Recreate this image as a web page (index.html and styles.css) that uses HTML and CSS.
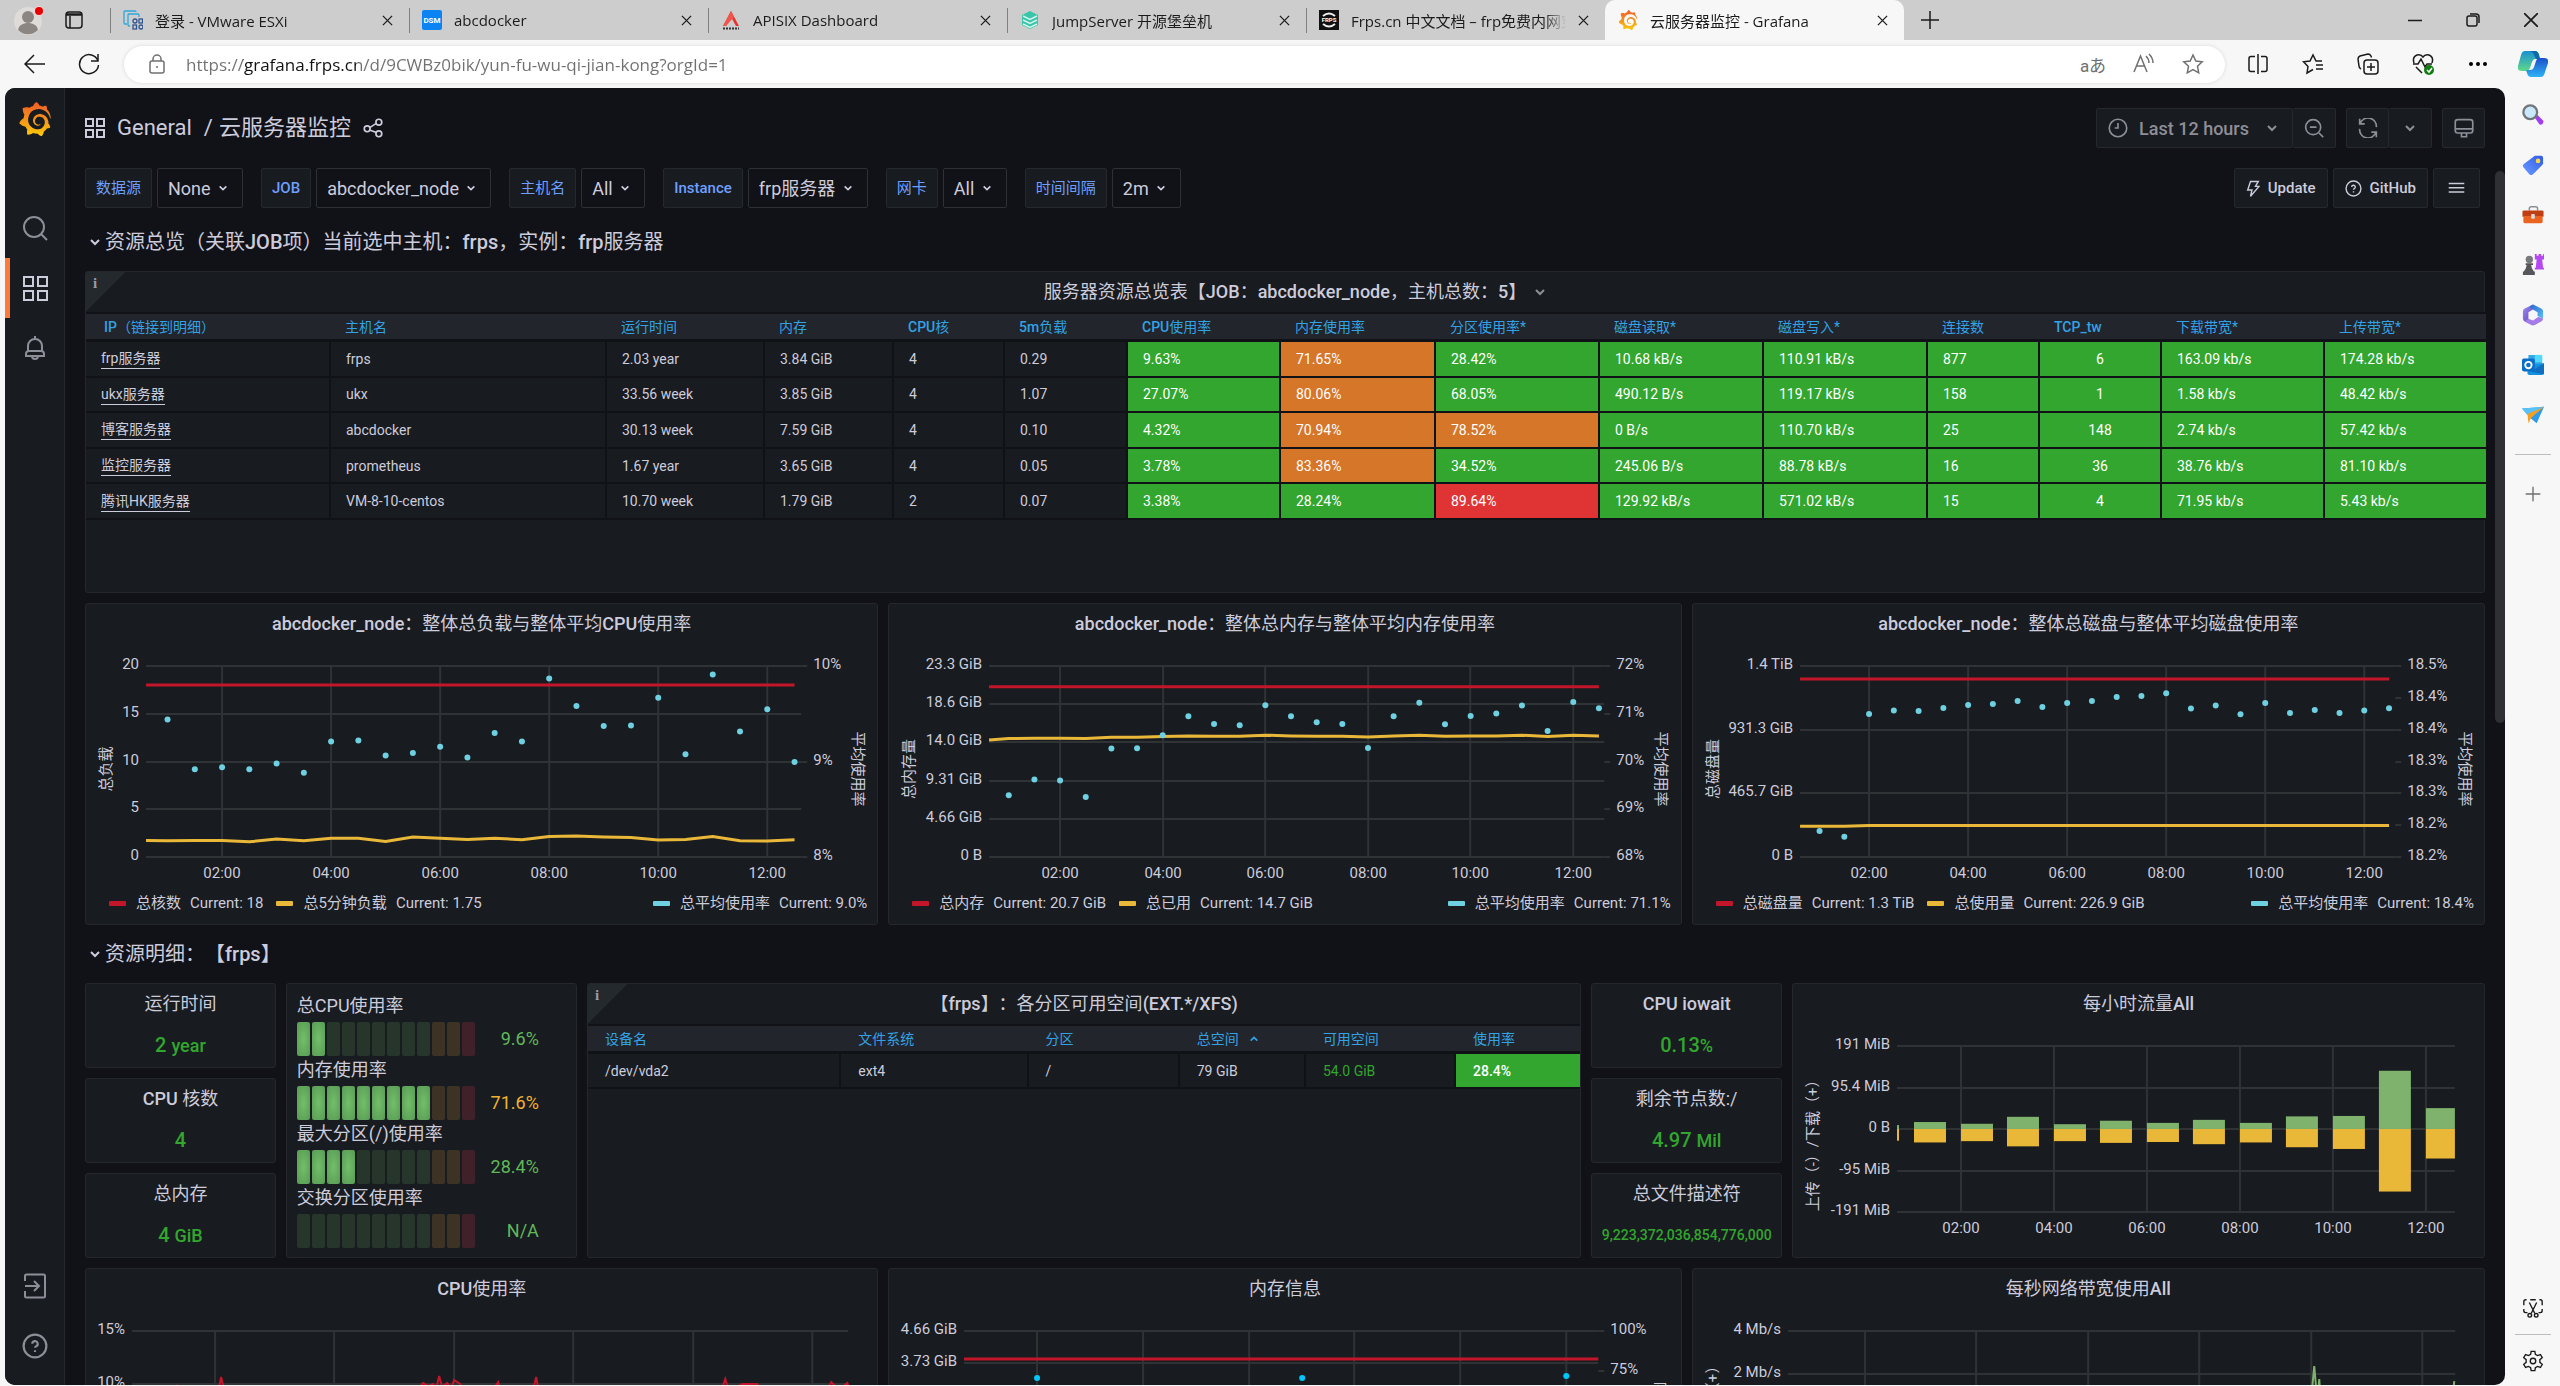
FILE: index.html
```html
<!DOCTYPE html>
<html lang="zh-CN">
<head>
<meta charset="UTF-8">
<title>云服务器监控 - Grafana</title>
<link rel="stylesheet" href="styles.css">
</head>
<body>

<!-- shared icons -->
<svg class="sprite" aria-hidden="true">
  <defs>
    <linearGradient id="flame" x1="0" y1="0" x2="0" y2="1"><stop offset="0" stop-color="#f05a28"/><stop offset="1" stop-color="#fbca0a"/></linearGradient>
    <linearGradient id="cop1" x1="0" y1="0" x2="0" y2="1"><stop offset="0" stop-color="#1b8fd2"/><stop offset="1" stop-color="#5fd98a"/></linearGradient>
    <linearGradient id="cop2" x1="0" y1="0" x2="0" y2="1"><stop offset="0" stop-color="#1a4fc9"/><stop offset="1" stop-color="#2fb4f5"/></linearGradient>
    <linearGradient id="tagg" x1="1" y1="0" x2="0" y2="1"><stop offset="0" stop-color="#2f5be8"/><stop offset="1" stop-color="#6b9bff"/></linearGradient>
    <linearGradient id="m1" x1="0" y1="0" x2="1" y2="1"><stop offset="0" stop-color="#a58bf0"/><stop offset="1" stop-color="#4a3fb0"/></linearGradient>
    <linearGradient id="m2" x1="0" y1="0" x2="1" y2="1"><stop offset="0" stop-color="#2a63d0"/><stop offset="1" stop-color="#5ac0f5"/></linearGradient>
  </defs>
  <symbol id="i-grafana" viewBox="0 0 24 24"><path fill="url(#flame)" d="M23.02 10.59a8.578 8.578 0 0 0-.862-3.034 8.911 8.911 0 0 0-1.789-2.445c.337-1.342-.413-2.505-.413-2.505-1.292-.08-2.113.4-2.416.62-.052-.02-.102-.044-.154-.064-.22-.089-.446-.172-.677-.247-.231-.073-.47-.14-.711-.197a9.867 9.867 0 0 0-.875-.161C14.557.753 12.94 0 12.94 0c-1.804 1.145-2.147 2.744-2.147 2.744l-.018.093c-.098.029-.2.057-.298.088-.138.042-.275.094-.413.143-.138.055-.275.107-.41.166a8.869 8.869 0 0 0-1.557.87l-.063-.029c-2.497-.955-4.716.195-4.716.195-.203 2.658.996 4.33 1.235 4.636a11.608 11.608 0 0 0-.607 2.635C1.636 12.677.953 15.014.953 15.014c1.926 2.214 4.171 2.351 4.171 2.351.003-.002.006-.002.006-.005.285.509.615.994.986 1.446.156.19.32.371.488.548-.704 2.009.099 3.68.099 3.68 2.144.08 3.553-.937 3.849-1.173a9.784 9.784 0 0 0 3.164.501h.08l.055-.003.107-.002.103-.005.003.002c1.01 1.44 2.788 1.646 2.788 1.646 1.264-1.332 1.337-2.653 1.337-2.94v-.058c0-.02-.003-.039-.003-.06.265-.187.52-.387.758-.6a7.875 7.875 0 0 0 1.415-1.7c1.43.083 2.437-.885 2.437-.885-.236-1.49-1.085-2.216-1.264-2.354l-.018-.013-.016-.013a.217.217 0 0 1-.031-.02c.008-.092.016-.18.02-.27.011-.162.016-.323.016-.48v-.253l-.005-.098-.008-.135a1.891 1.891 0 0 0-.01-.13c-.003-.042-.008-.083-.013-.125l-.016-.124-.018-.122a6.215 6.215 0 0 0-2.032-3.73 6.015 6.015 0 0 0-3.222-1.46 6.292 6.292 0 0 0-.85-.048l-.107.002h-.063l-.044.003-.104.008a4.777 4.777 0 0 0-3.335 1.695c-.332.4-.592.84-.768 1.297a4.594 4.594 0 0 0-.312 1.817l.003.091c.005.055.007.11.013.164a3.615 3.615 0 0 0 .698 1.82 3.53 3.53 0 0 0 1.827 1.282c.33.098.66.14.971.137.039 0 .078 0 .114-.002l.063-.003c.02 0 .041-.003.062-.003.034-.002.065-.007.099-.01.007 0 .018-.003.028-.003l.031-.005.06-.008a1.18 1.18 0 0 0 .112-.02c.036-.008.072-.013.109-.024a2.634 2.634 0 0 0 .914-.415c.028-.02.056-.041.085-.065a.248.248 0 0 0 .039-.35.244.244 0 0 0-.309-.06l-.078.042c-.09.044-.184.083-.283.116a2.476 2.476 0 0 1-.475.096c-.028.003-.054.006-.083.006l-.083.002c-.026 0-.054 0-.08-.002l-.102-.006h-.012l-.024.006c-.016-.003-.031-.003-.044-.006-.031-.002-.06-.007-.091-.01a2.59 2.59 0 0 1-.724-.213 2.557 2.557 0 0 1-.667-.438 2.52 2.52 0 0 1-.805-1.475 2.306 2.306 0 0 1-.029-.444l.006-.122v-.023l.002-.031c.003-.021.003-.04.005-.06a3.163 3.163 0 0 1 1.352-2.29 3.12 3.12 0 0 1 .937-.43 2.946 2.946 0 0 1 .776-.101h.06l.07.002.045.003h.026l.07.005a4.041 4.041 0 0 1 1.635.49 3.94 3.94 0 0 1 1.602 1.662 3.77 3.77 0 0 1 .397 1.414l.005.076.003.075c.002.026.002.05.002.075 0 .024.003.052 0 .07v.065l-.002.073-.008.174a6.195 6.195 0 0 1-.08.639 5.1 5.1 0 0 1-.267.927 5.31 5.31 0 0 1-.624 1.13 5.052 5.052 0 0 1-3.237 2.014 4.82 4.82 0 0 1-.649.066l-.039.003h-.287a6.607 6.607 0 0 1-1.716-.265 6.776 6.776 0 0 1-3.4-2.274 6.75 6.75 0 0 1-.746-1.15 6.616 6.616 0 0 1-.714-2.596l-.005-.083-.002-.02v-.056l-.003-.073v-.096l-.003-.104v-.07l.003-.163c.008-.22.026-.45.054-.678a8.707 8.707 0 0 1 .28-1.355c.128-.444.286-.872.473-1.277a7.04 7.04 0 0 1 1.456-2.1 5.925 5.925 0 0 1 .953-.763c.169-.111.343-.213.524-.306.089-.05.182-.091.273-.135.047-.02.093-.042.138-.062a7.177 7.177 0 0 1 .714-.267l.145-.045c.049-.015.098-.026.148-.041.098-.029.197-.052.296-.076.049-.013.1-.02.15-.033l.15-.032.151-.028.076-.013.075-.01.153-.024c.057-.01.114-.013.171-.023l.169-.021c.036-.003.073-.008.106-.01l.073-.008.036-.003.042-.002c.057-.003.114-.008.171-.01l.086-.006h.023l.037-.003.145-.007a7.999 7.999 0 0 1 1.708.125 7.917 7.917 0 0 1 2.048.68 8.253 8.253 0 0 1 1.672 1.09l.09.077.089.078c.06.052.114.107.171.159.057.052.112.106.166.16.052.055.107.107.159.164a8.671 8.671 0 0 1 1.41 1.978c.012.026.028.052.04.078l.04.078.075.156c.023.051.05.1.07.153l.065.15a8.848 8.848 0 0 1 .45 1.34.19.19 0 0 0 .201.142.186.186 0 0 0 .172-.184c.01-.246.002-.532-.024-.856z"/></symbol>
  <symbol id="i-apps" viewBox="2 2 20 20"><path d="M3 3h7v7H3zM14 3h7v7h-7zM3 14h7v7H3zM14 14h7v7h-7z"/></symbol>
  <symbol id="i-down" viewBox="0 0 12 12"><path d="M2 4l4 4 4-4"/></symbol>
  <symbol id="i-close" viewBox="0 0 12 12"><path d="M1 1l10 10M11 1L1 11"/></symbol>
  <symbol id="i-help" viewBox="0 0 24 24"><circle cx="12" cy="12" r="10.500"/><path d="M9.500 10a2.500 2.500 0 1 1 3.600 2.200c-.7.4-1.100.7-1.100 1.500M12 16v1.500"/></symbol>
</svg>

<header class="tabs">
  <button class="avatar" aria-label="Profile">
    <svg width="30" height="30" viewBox="0 0 30 30"><circle cx="14" cy="16" r="14" fill="#dedbd8"/><circle cx="14" cy="12" r="6" fill="#8c8682"/><path d="M4 25c1-5 5-7 10-7s9 2 10 7a14 14 0 0 1-20 0z" fill="#8c8682"/><circle cx="25" cy="6" r="5" fill="#f3d5d5"/><circle cx="25" cy="6" r="4" fill="#e80000"/></svg>
  </button>
  <button class="spaces" aria-label="Workspaces">
    <svg class="line dark" width="20" height="20" viewBox="0 0 20 20"><rect x="2" y="2" width="16" height="16" rx="3"/><path d="M2 4h16M2 5h16M6 6v12"/></svg>
  </button>
  <div class="tab">
    <svg class="fav" viewBox="0 0 20 20" fill="none" stroke="#31a6dc" stroke-width="1.3"><path d="M4 14H2q-1 0-1-1V2q0-1 1-1h10q1 0 1 1M7 16H6q-1 0-1-1V5q0-1 1-1h9q1 0 1 1v2"/><g stroke="#31568f"><circle cx="12" cy="11" r="2"/><rect x="16" y="9" width="3.5" height="4"/><rect x="10" y="15" width="3.5" height="4"/><circle cx="18" cy="17" r="2"/></g></svg>
    <span class="name">登录 - VMware ESXi</span><button class="x" aria-label="Close"><svg><use href="#i-close"/></svg></button>
  </div>
  <div class="tab">
    <svg class="fav" viewBox="0 0 20 20"><rect width="20" height="20" rx="2" fill="#0b83f3"/><text x="10" y="13" text-anchor="middle" font-size="8" font-weight="700" fill="#fff" font-family="Roboto, sans-serif">DSM</text></svg>
    <span class="name">abcdocker</span><button class="x" aria-label="Close"><svg><use href="#i-close"/></svg></button>
  </div>
  <div class="tab">
    <svg class="fav" viewBox="0 0 20 20"><path d="M10 1l8 15h-3L10 7l-5 9H2z" fill="#e8332c"/><path d="M10 1l3 6-8 9H2z" fill="#f0554c"/><path d="M2 18.500h16" stroke="#333" stroke-width="2" stroke-dasharray="2 1"/></svg>
    <span class="name">APISIX Dashboard</span><button class="x" aria-label="Close"><svg><use href="#i-close"/></svg></button>
  </div>
  <div class="tab">
    <svg class="fav" viewBox="0 0 20 20" fill="none" stroke="#1fb598" stroke-width="2"><path d="M10 1l8 4v10l-8 4-8-4V5z" fill="#39c5a9" stroke="none"/><g stroke="#d5f3ec" stroke-width="1.500"><path d="M17 6l-7 3.500L3 6M3 10l7 3.500L17 10M3 14l7 3.500L17 14"/></g></svg>
    <span class="name">JumpServer 开源堡垒机</span><button class="x" aria-label="Close"><svg><use href="#i-close"/></svg></button>
  </div>
  <div class="tab">
    <svg class="fav" viewBox="0 0 20 20"><rect width="20" height="20" fill="#111"/><path d="M4 6q6-5 12 0M4 14q6 5 12 0" stroke="#eee" stroke-width="2" fill="none"/><text x="10" y="12" text-anchor="middle" font-size="6" font-weight="700" fill="#fff" font-family="Roboto, sans-serif">FRPS</text></svg>
    <span class="name">Frps.cn 中文文档 – frp免费内网穿</span><button class="x" aria-label="Close"><svg><use href="#i-close"/></svg></button>
  </div>
  <div class="tab active">
    <svg class="fav"><use href="#i-grafana"/></svg>
    <span class="name">云服务器监控 - Grafana</span><button class="x" aria-label="Close"><svg><use href="#i-close"/></svg></button>
  </div>
  <button class="new" aria-label="New tab"><svg class="line dark" width="18" height="18" viewBox="0 0 18 18"><path d="M9 0v18M0 9h18"/></svg></button>
  <div class="win">
    <button aria-label="Minimize"><svg class="line dark" width="14" height="14" viewBox="0 0 14 14"><path d="M0 7.500h14"/></svg></button>
    <button aria-label="Restore"><svg class="line dark" width="14" height="14" viewBox="0 0 14 14"><rect x="1" y="3" width="10" height="10" rx="2"/><path d="M4 1h6q3 0 3 3v6"/></svg></button>
    <button aria-label="Close window"><svg class="line dark" width="14" height="14" viewBox="0 0 12 12"><path d="M0 0l12 12M12 0L0 12"/></svg></button>
  </div>
</header>

<div class="toolbar">
  <button aria-label="Back"><svg class="line dark" width="22" height="22" viewBox="0 0 22 22"><path d="M21 11H1M10 2l-9 9 9 9"/></svg></button>
  <button aria-label="Reload"><svg class="line dark" width="22" height="22" viewBox="0 0 22 22"><path d="M20 8a9.500 9.500 0 1 0 .5 4M20 1v7h-7"/></svg></button>
  <div class="address">
    <svg class="line mid" width="20" height="22" viewBox="0 0 20 22"><rect x="3" y="8" width="14" height="12" rx="2"/><path d="M6 8V6a4 4 0 0 1 8 0v2M10 13v2"/></svg>
    <input class="url" type="text" aria-label="Address" value="https://grafana.frps.cn/d/9CWBz0bik/yun-fu-wu-qi-jian-kong?orgId=1">
    <button class="lang" aria-label="Translate">aあ</button>
    <button aria-label="Read aloud"><svg class="line mid" width="22" height="22" viewBox="0 0 22 22"><path d="M2 19L8.500 3 15 19M4.500 13h8M14 3q3 3 3 7M17 1q4 4 4 9"/></svg></button>
    <button aria-label="Favorite"><svg class="line mid" width="22" height="22" viewBox="0 0 22 22"><path d="M11 2l2.800 6 6.400.8-4.700 4.500 1.200 6.500L11 16.600l-5.700 3.200 1.200-6.500L1.800 8.800 8.200 8z"/></svg></button>
  </div>
  <div class="tools">
    <button aria-label="Split screen"><svg class="line dark" width="22" height="22" viewBox="0 0 22 22"><path d="M8 3.500H4q-2 0-2 2v11q0 2 2 2h4M14 3.500h4q2 0 2 2v11q0 2-2 2h-4M11 1v20"/></svg></button>
    <button aria-label="Favorites"><svg class="line dark" width="22" height="22" viewBox="0 0 22 22"><path d="M20 8h-6l-3-6-3 6-6.500.8L6 13.500 5 20l6-3.500M14 12h7M14 16h7"/></svg></button>
    <button aria-label="Collections"><svg class="line dark" width="22" height="22" viewBox="0 0 22 22"><rect x="7" y="7" width="14" height="14" rx="3"/><path d="M14 10v8M10 14h8M4 16q-2-1-2-3L1 6q0-2 2-3l8-2q2 0 3 2l.5 1.500"/></svg></button>
    <button aria-label="Browser essentials"><svg class="line dark" width="22" height="22" viewBox="0 0 22 22"><path d="M2 10Q0 4 5 2q4-1 6 2 2-3 6-2 5 2 3 8M1 11h5l3-5 4 8 2-3h5M4 14l6 6"/><circle cx="17" cy="17" r="5" fill="#107c10" stroke="none"/><path d="M15 17l2 2 3-4" stroke="#fff"/></svg></button>
    <button aria-label="More"><svg width="22" height="22" viewBox="0 0 22 22"><circle cx="4" cy="11" r="2"/><circle cx="11" cy="11" r="2"/><circle cx="18" cy="11" r="2"/></svg></button>
    <button aria-label="Copilot"><svg width="30" height="28" viewBox="0 0 30 28"><path d="M7 1h10q3 0 4 4l1 4h-5q-2 0-3 3l-2 6q-1 3-4 3H4q-5 0-4-5L3 5q1-4 4-4z" fill="url(#cop1)"/><path d="M17 1q3 0 4 4l1 4h-4l-2-4q-1-4-5-4z" fill="#0f6aa8"/><path d="M23 27H13q-3 0-4-4l-1-3h4q3 0 4-3l2-6q1-3 4-3h4q5 0 4 5l-3 9q-1 5-4 5z" fill="url(#cop2)"/></svg></button>
  </div>
</div>

<div class="window">
  <div class="grafana">
    <nav class="sidemenu">
      <a class="logo" href="#" aria-label="Home"><svg><use href="#i-grafana"/></svg></a>
      <a href="#" aria-label="Search"><svg viewBox="0 0 26 26"><circle cx="12" cy="12" r="10"/><path d="M19.500 19.500L25 25"/></svg></a>
      <a class="on" href="#" aria-label="Dashboards"><svg viewBox="0 0 26 26"><path d="M2 2h9v9H2zM16 2h9v9h-9zM2 16h9v9H2zM16 16h9v9h-9z"/></svg></a>
      <a href="#" aria-label="Alerting"><svg viewBox="0 0 26 26"><path d="M13 1v3M6 16v-5a7 7 0 0 1 14 0v5M4 21v-2q0-3 3-3h12q3 0 3 3v2zM10 21q0 3 3 3t3-3"/></svg></a>
      <a class="bottom" href="#" aria-label="Sign in"><svg viewBox="0 0 26 26"><path d="M3 8V3q0-1.500 1.500-1.500h17Q23 1.500 23 3v20q0 1.500-1.500 1.500h-17Q3 24.500 3 23v-5M3 13h14M12 8l5 5-5 5"/></svg></a>
      <a href="#" aria-label="Help"><svg><use href="#i-help"/></svg></a>
    </nav>

    <main class="main">
      <div class="bar">
        <h1 class="crumbs">
          <svg class="ic"><use href="#i-apps"/></svg>
          <a href="#">General</a><span>/</span><a href="#">云服务器监控</a>
          <svg class="ic" viewBox="0 0 24 24"><circle cx="5" cy="13" r="3.500"/><circle cx="19" cy="5" r="3.500"/><circle cx="19" cy="19" r="3.500"/><path d="M8 11.500l8-5M8 14.500l8 3"/></svg>
        </h1>
        <div class="group">
          <button class="btn time"><svg class="ic" viewBox="0 0 24 24"><circle cx="12" cy="12" r="10.500"/><path d="M12 6v6H8"/></svg>Last 12 hours<svg class="ch"><use href="#i-down"/></svg></button>
          <button class="btn icon" aria-label="Zoom out"><svg class="ic" viewBox="0 0 24 24"><circle cx="11" cy="11" r="9"/><path d="M7 11h8M18 18l5 5"/></svg></button>
        </div>
        <div class="group">
          <button class="btn icon" aria-label="Refresh"><svg class="ic" viewBox="0 0 24 24"><path d="M2 1v6h6M2.500 7A10 10 0 0 1 22 11M22 23v-6h-6M21.500 17A10 10 0 0 1 2 13"/></svg></button>
          <button class="btn icon" aria-label="Interval"><svg class="ch"><use href="#i-down"/></svg></button>
        </div>
        <div class="group">
          <button class="btn icon" aria-label="Cycle view"><svg class="ic" viewBox="0 0 24 24"><rect x="1.500" y="2" width="21" height="16" rx="3"/><path d="M2 13h20M8 22.500h8M9 18v4M15 18v4"/></svg></button>
        </div>
      </div>

      <div class="bar submenu">
        <div class="var"><label for="v1">数据源</label><select id="v1"><option>None</option></select></div>
        <div class="var"><label for="v2"><b>JOB</b></label><select id="v2"><option>abcdocker_node</option></select></div>
        <div class="var"><label for="v3">主机名</label><select id="v3"><option>All</option></select></div>
        <div class="var"><label for="v4"><b>Instance</b></label><select id="v4"><option>frp服务器</option></select></div>
        <div class="var"><label for="v5">网卡</label><select id="v5"><option>All</option></select></div>
        <div class="var"><label for="v6">时间间隔</label><select id="v6"><option>2m</option></select></div>
        <div class="links">
          <a class="btn" href="#"><svg class="ic bolt" viewBox="2 0 19 24"><path d="M8 2h11l-4 7h5L8 23l2-9H4z"/></svg>Update</a>
          <a class="btn" href="#"><svg class="ic"><use href="#i-help"/></svg>GitHub</a>
          <button class="btn menu" aria-label="Menu"><svg class="ic" viewBox="0 0 24 24"><path d="M1 5h22M1 11h22M1 17h22"/></svg></button>
        </div>
      </div>

      <h2 class="row"><svg class="ch"><use href="#i-down"/></svg><span>资源总览（关联<b>JOB</b>项）当前选中主机：<b>frps</b>，实例：<b>frp</b>服务器</span></h2>

      <div class="grid">
        <section class="panel w24 overview">
          <span class="info">i</span>
          <h3><span>服务器资源总览表【<b>JOB</b>：<b>abcdocker_node</b>，主机总数：<b>5</b>】</span><svg class="ch"><use href="#i-down"/></svg></h3>
          <table class="hosts">
            <colgroup><col class="c245"><col class="c276"><col class="c158"><col class="c129"><col class="c111"><col class="c123"><col class="c153"><col class="c155"><col class="c164"><col class="c164"><col class="c164"><col class="c112"><col class="c122"><col class="c163"><col class="c161"></colgroup>
            <thead>
              <tr><th><b>IP</b>（链接到明细）</th><th>主机名</th><th>运行时间</th><th>内存</th><th><b>CPU</b>核</th><th><b>5m</b>负载</th><th><b>CPU</b>使用率</th><th>内存使用率</th><th>分区使用率*</th><th>磁盘读取*</th><th>磁盘写入*</th><th>连接数</th><th><b>TCP_tw</b></th><th>下载带宽*</th><th>上传带宽*</th></tr>
            </thead>
            <tbody>
              <tr><td><a href="#">frp服务器</a></td><td>frps</td><td>2.03 year</td><td>3.84 GiB</td><td>4</td><td>0.29</td><td class="ok">9.63%</td><td class="warn">71.65%</td><td class="ok">28.42%</td><td class="ok">10.68 kB/s</td><td class="ok">110.91 kB/s</td><td class="ok">877</td><td class="ok mid">6</td><td class="ok">163.09 kb/s</td><td class="ok">174.28 kb/s</td></tr>
              <tr><td><a href="#">ukx服务器</a></td><td>ukx</td><td>33.56 week</td><td>3.85 GiB</td><td>4</td><td>1.07</td><td class="ok">27.07%</td><td class="warn">80.06%</td><td class="ok">68.05%</td><td class="ok">490.12 B/s</td><td class="ok">119.17 kB/s</td><td class="ok">158</td><td class="ok mid">1</td><td class="ok">1.58 kb/s</td><td class="ok">48.42 kb/s</td></tr>
              <tr><td><a href="#">博客服务器</a></td><td>abcdocker</td><td>30.13 week</td><td>7.59 GiB</td><td>4</td><td>0.10</td><td class="ok">4.32%</td><td class="warn">70.94%</td><td class="warn">78.52%</td><td class="ok">0 B/s</td><td class="ok">110.70 kB/s</td><td class="ok">25</td><td class="ok mid">148</td><td class="ok">2.74 kb/s</td><td class="ok">57.42 kb/s</td></tr>
              <tr><td><a href="#">监控服务器</a></td><td>prometheus</td><td>1.67 year</td><td>3.65 GiB</td><td>4</td><td>0.05</td><td class="ok">3.78%</td><td class="warn">83.36%</td><td class="ok">34.52%</td><td class="ok">245.06 B/s</td><td class="ok">88.78 kB/s</td><td class="ok">16</td><td class="ok mid">36</td><td class="ok">38.76 kb/s</td><td class="ok">81.10 kb/s</td></tr>
              <tr><td><a href="#">腾讯HK服务器</a></td><td>VM-8-10-centos</td><td>10.70 week</td><td>1.79 GiB</td><td>2</td><td>0.07</td><td class="ok">3.38%</td><td class="ok">28.24%</td><td class="bad">89.64%</td><td class="ok">129.92 kB/s</td><td class="ok">571.02 kB/s</td><td class="ok">15</td><td class="ok mid">4</td><td class="ok">71.95 kb/s</td><td class="ok">5.43 kb/s</td></tr>
            </tbody>
          </table>
        </section>

        <section class="panel w8">
          <h3><span><b>abcdocker_node</b>：整体总负载与整体平均<b>CPU</b>使用率</span></h3>
          <div class="chart" id="load"></div>
          <ul class="legend"><li class="red">总核数<span>Current: 18</span></li><li class="yellow">总5分钟负载<span>Current: 1.75</span></li><li class="cyan">总平均使用率<span>Current: 9.0%</span></li></ul>
        </section>
        <section class="panel w8">
          <h3><span><b>abcdocker_node</b>：整体总内存与整体平均内存使用率</span></h3>
          <div class="chart" id="mem"></div>
          <ul class="legend"><li class="red">总内存<span>Current: 20.7 GiB</span></li><li class="yellow">总已用<span>Current: 14.7 GiB</span></li><li class="cyan">总平均使用率<span>Current: 71.1%</span></li></ul>
        </section>
        <section class="panel w8">
          <h3><span><b>abcdocker_node</b>：整体总磁盘与整体平均磁盘使用率</span></h3>
          <div class="chart" id="disk"></div>
          <ul class="legend"><li class="red">总磁盘量<span>Current: 1.3 TiB</span></li><li class="yellow">总使用量<span>Current: 226.9 GiB</span></li><li class="cyan">总平均使用率<span>Current: 18.4%</span></li></ul>
        </section>
      </div>

      <h2 class="row second"><svg class="ch"><use href="#i-down"/></svg><span>资源明细：【<b>frps</b>】</span></h2>

      <div class="grid">
        <div class="stack w2">
          <section class="panel stat"><h3>运行时间</h3><p>2 <small>year</small></p></section>
          <section class="panel stat"><h3><span><b>CPU</b> 核数</span></h3><p>4</p></section>
          <section class="panel stat"><h3>总内存</h3><p>4 <small>GiB</small></p></section>
        </div>
        <section class="panel w3 gauges">
          <div class="gauge" data-lit="2"><h4>总CPU使用率</h4><div class="lcd"></div><span>9.6%</span></div>
          <div class="gauge" data-lit="9"><h4>内存使用率</h4><div class="lcd"></div><span class="high">71.6%</span></div>
          <div class="gauge" data-lit="4"><h4>最大分区(/)使用率</h4><div class="lcd"></div><span>28.4%</span></div>
          <div class="gauge" data-lit="0"><h4>交换分区使用率</h4><div class="lcd"></div><span>N/A</span></div>
        </section>
        <section class="panel w10">
          <span class="info">i</span>
          <h3><span>【<b>frps</b>】：各分区可用空间<b>(EXT.*/XFS)</b></span></h3>
          <table class="parts">
            <colgroup><col class="c253"><col class="c187"><col class="c151"><col class="c126"><col class="c150"><col class="c124"></colgroup>
            <thead>
              <tr><th>设备名</th><th>文件系统</th><th>分区</th><th>总空间<svg class="ch up"><use href="#i-down"/></svg></th><th>可用空间</th><th>使用率</th></tr>
            </thead>
            <tbody>
              <tr><td>/dev/vda2</td><td>ext4</td><td>/</td><td>79 GiB</td><td class="free">54.0 GiB</td><td class="ok"><b>28.4%</b></td></tr>
            </tbody>
          </table>
        </section>
        <div class="stack w2">
          <section class="panel stat"><h3><b>CPU iowait</b></h3><p>0.13<small>%</small></p></section>
          <section class="panel stat"><h3>剩余节点数:/</h3><p>4.97 <small>Mil</small></p></section>
          <section class="panel stat"><h3>总文件描述符</h3><p class="long">9,223,372,036,854,776,000</p></section>
        </div>
        <section class="panel w7">
          <h3><span>每小时流量<b>All</b></span></h3>
          <div class="chart" id="traffic"></div>
        </section>

        <section class="panel w8"><h3><span><b>CPU</b>使用率</span></h3><div class="chart" id="cpu"></div></section>
        <section class="panel w8"><h3>内存信息</h3><div class="chart" id="meminfo"></div></section>
        <section class="panel w8"><h3><span>每秒网络带宽使用<b>All</b></span></h3><div class="chart" id="net"></div></section>
      </div>
      <div class="thumb"></div>
    </main>
  </div>

  <aside class="edgebar">
    <button aria-label="Search"><svg viewBox="0 0 24 24"><path d="M14 15l3-3 6 6q1 2-1 4-2 1-3 0z" fill="#a23cf0"/><circle cx="9" cy="9" r="7.500" fill="#c9e9fb" stroke="#72767b" stroke-width="2.500"/></svg></button>
    <button aria-label="Shopping"><svg viewBox="0 0 24 24"><path d="M14 2h7q2 0 2 2v7L12 22q-2 2-4 0l-6-7q-2-2 0-4z" fill="url(#tagg)"/><circle cx="17.500" cy="7.500" r="2.500" fill="#f8d64a"/></svg></button>
    <button aria-label="Tools"><svg viewBox="0 0 24 24"><path d="M8 7V5q0-2 2-2h5q2 0 2 2v2" fill="none" stroke="#8b8f95" stroke-width="1.600"/><path d="M2 7h20q1.500 0 1.500 1.500V14H.5V8.500Q.5 7 2 7z" fill="#c03f12"/><path d="M1.500 13h21v6q0 2-2 2h-17q-2 0-2-2z" fill="#ea6420"/><rect x="10" y="11" width="4" height="5" rx="1" fill="#d8dadd"/></svg></button>
    <button aria-label="Games"><svg viewBox="0 0 24 24"><path d="M14 0h2v2h2V0h3v2h2V0h1v6h-2l1 9h1v2H14v-2h1l1-9h-2z" fill="#b648f2"/><circle cx="8" cy="6" r="4" fill="#77797c"/><path d="M4 10h8v2h-2q0 4 3 7h1v4H1v-4h1q3-3 3-7H4z" fill="#55575a"/></svg></button>
    <button aria-label="Microsoft 365"><svg viewBox="0 0 24 24"><path d="M12 .5L3 5Q1 6 1 8v8q0 2 2 3l4 2V9l8-5z" fill="url(#m1)"/><path d="M12 .5l9 4.500q2 1 2 3v8l-6-3V9L10 5 8 3z" fill="url(#m2)"/><path d="M7 16l5 2 6-4 5 2q0 2-2 3l-7 4q-2 1-4 0l-7-4z" fill="#a57be8"/><path d="M12 8l4 2v4l-4 2-4-2v-4z" fill="#f7f7f7"/></svg></button>
    <button aria-label="Outlook"><svg viewBox="0 0 24 24"><path d="M7 1h13q2 0 2 2v9H7z" fill="#32a9e7"/><path d="M14 1h8v8h-8z" fill="#50d9ff"/><path d="M6 12l18-2v11q0 2-2 2H8q-2 0-2-2z" fill="#1490df"/><path d="M24 10L10 19l13 3q1 0 1-2z" fill="#0f6fbe"/><rect x="0" y="5" width="14" height="14" rx="2" fill="#0a6fc9"/><circle cx="7" cy="12" r="3.500" fill="none" stroke="#fff" stroke-width="2"/></svg></button>
    <button aria-label="Drop"><svg viewBox="0 0 24 24"><path d="M0 5l24-2-8 18-6-5z" fill="#2e9be8"/><path d="M0 5l24-2L6 12z" fill="#58c2f6"/><path d="M24 3L6 11l1 10 3-6z" fill="#f2a024"/></svg></button>
    <hr>
    <button aria-label="Customize"><svg class="line mid" viewBox="0 0 24 24"><path d="M12 4v16M4 12h16"/></svg></button>
    <span class="grow"></span>
    <button aria-label="Screenshot"><svg class="line dark" viewBox="0 0 24 24"><path d="M6 17H4q-2 0-2-2v-2M2 9V5q0-2 2-2h1M9 3h6M19 3h1q2 0 2 2v4M22 13v2q0 2-2 2h-2M8 6l6 12M16 6l-6 12"/><circle cx="8.500" cy="20" r="2"/><circle cx="15.500" cy="20" r="2"/></svg></button>
    <hr>
    <button aria-label="Settings"><svg class="line dark" viewBox="0 0 24 24"><circle cx="12" cy="12" r="3"/><path d="M10 1.500h4l.6 3.300 2.300 1.300 3.200-1.200 2 3.500-2.600 2.100v3l2.600 2.100-2 3.500-3.200-1.200-2.300 1.300-.6 3.300h-4l-.6-3.300-2.300-1.300-3.200 1.200-2-3.500 2.600-2.100v-3L1.900 8.400l2-3.500 3.200 1.200 2.300-1.300z"/></svg></button>
  </aside>
</div>

<script src="charts.js"></script>
</body>
</html>
```
FILE: styles.css
```css
* {
  box-sizing: border-box;
}

body {
  margin: 0;
  height: 100vh;
  display: flex;
  flex-direction: column;
  overflow: hidden;
  background: #f7f7f7;
  font-family: Roboto, "Noto Sans CJK SC", sans-serif;
  color: #ccccdc;
  text-spacing-trim: space-all;
}

button {
  border: 0;
  background: none;
  padding: 0;
  font: inherit;
  color: inherit;
  display: flex;
  align-items: center;
  justify-content: center;
}

a {
  color: inherit;
  text-decoration: none;
}

h1, h2, h3, h4, p, ul {
  margin: 0;
  padding: 0;
  font-weight: 400;
}

b {
  font-weight: 500;
}

.sprite {
  position: absolute;
  width: 0;
  height: 0;
}

.line {
  fill: none;
  stroke-width: 1.5;
}

.dark {
  stroke: #1b1b1b;
}

.mid {
  stroke: #707070;
}

/* browser tabs */
.tabs {
  height: 40px;
  flex: none;
  display: flex;
  align-items: center;
  background: #cdcdcd;
  color: #1b1b1b;
  font-family: "Open Sans", "Noto Sans CJK SC", sans-serif;
  font-size: 15px;
}

.avatar {
  margin: 0 20px 0 14px;
}

.spaces {
  margin-right: 26px;
}

.tab {
  width: 299px;
  height: 40px;
  display: flex;
  align-items: center;
  padding: 0 13px;
  position: relative;
}

.tab::before {
  content: "";
  position: absolute;
  left: 0;
  top: 8px;
  width: 1px;
  height: 25px;
  background: #808080;
}

.tab.active {
  background: #f7f7f7;
  border-radius: 10px 10px 0 0;
}

.tab.active::before {
  display: none;
}

.fav {
  width: 20px;
  height: 20px;
  flex: none;
  margin-right: 12px;
}

.name {
  flex: 1;
  overflow: hidden;
  white-space: nowrap;
  -webkit-mask-image: linear-gradient(90deg, #000 90%, transparent);
  mask-image: linear-gradient(90deg, #000 90%, transparent);
}

.x svg {
  width: 11px;
  height: 11px;
  stroke: #1b1b1b;
  stroke-width: 1.4;
}

.x {
  width: 18px;
  margin-left: 8px;
}

.new {
  width: 52px;
}

.win {
  margin-left: auto;
  display: flex;
}

.win button {
  width: 58px;
}

/* address row */
.toolbar {
  height: 48px;
  flex: none;
  display: flex;
  align-items: center;
  padding-left: 8px;
}

.toolbar > button {
  width: 54px;
}

.address {
  flex: 1;
  height: 37px;
  display: flex;
  align-items: center;
  margin-left: 8px;
  padding: 0 7px 0 23px;
  border-radius: 19px;
  background: #fff;
  box-shadow: 0 0 4px rgba(0, 0, 0, .12);
  color: #707070;
}

.url {
  flex: 1;
  margin-left: 19px;
  padding: 0;
  border: 0;
  outline: 0;
  font-family: "Open Sans", sans-serif;
  font-size: 17px;
  color: transparent;
  background: linear-gradient(90deg, #707070 57px, #111 57px, #111 170px, #707070 170px);
  -webkit-background-clip: text;
  background-clip: text;
}

.address button {
  width: 50px;
}

.address .lang {
  font-size: 17px;
}

.tools {
  display: flex;
  padding-left: 5px;
}

.tools button {
  width: 55px;
}

.window {
  flex: 1;
  min-height: 0;
  display: flex;
  padding: 0 0 1px 5px;
}

.grafana {
  flex: 1;
  min-width: 0;
  display: flex;
  border-radius: 10px;
  overflow: hidden;
  background: #111217;
}

/* grafana side menu */
.sidemenu {
  width: 60px;
  flex: none;
  display: flex;
  flex-direction: column;
  padding-bottom: 9px;
  background: #181b1f;
  border-right: 1px solid #24272c;
}

.sidemenu a {
  height: 60px;
  display: flex;
  align-items: center;
  justify-content: center;
  border-left: 5px solid transparent;
  border-right: 5px solid transparent;
}

.sidemenu a.logo {
  height: 62px;
  margin-bottom: 48px;
}

.sidemenu svg {
  width: 26px;
  height: 26px;
  fill: none;
  stroke: #8e8e99;
  stroke-width: 2;
}

.sidemenu .logo svg {
  width: 34px;
  height: 34px;
  stroke: none;
}

.sidemenu a.on {
  border-left: 5px solid #ff7a38;
}

.sidemenu .on svg {
  stroke: #ccccdc;
}

.sidemenu .bottom {
  margin-top: auto;
}

/* dashboard */
.main {
  flex: 1;
  min-width: 0;
  padding: 20px;
  position: relative;
  overflow: hidden;
}

.thumb {
  position: absolute;
  right: 0;
  top: 83px;
  width: 10px;
  height: 552px;
  border-radius: 5px;
  background: #2e3036;
}

.bar {
  height: 40px;
  display: flex;
  align-items: center;
  gap: 10px;
}

.ic {
  width: 20px;
  height: 20px;
  flex: none;
  fill: none;
  stroke: currentColor;
  stroke-width: 2;
}

.ch {
  width: 12px;
  height: 12px;
  flex: none;
  fill: none;
  stroke: currentColor;
  stroke-width: 2;
}

.crumbs {
  flex: 1;
  display: flex;
  align-items: center;
  gap: 12px;
  font-size: 22px;
  line-height: 30px;
}

.crumbs span {
  margin-right: -6px;
}

.group {
  display: flex;
  color: #8e8e99;
}

.btn {
  height: 40px;
  display: flex;
  align-items: center;
  gap: 8px;
  padding: 0 11px;
  background: #181b1f;
  border: 1px solid #25282d;
  border-radius: 2px;
}

.group .btn + .btn {
  border-left: 0;
}

.btn.time {
  gap: 11px;
  font-size: 18px;
  font-weight: 500;
}

.btn.time .ch {
  margin: 0 3px 0 6px;
}

.btn.icon {
  width: 43px;
  padding: 0;
}

.submenu {
  margin-top: 20px;
  gap: 18px;
}

.var {
  display: flex;
  gap: 5px;
}

.var label {
  height: 40px;
  padding: 0 10px;
  line-height: 38px;
  background: #181b1f;
  border: 1px solid #25282d;
  border-radius: 2px;
  color: #6e9fff;
  font-size: 15px;
}

.var select {
  height: 40px;
  padding: 0 31px 0 10px;
  -webkit-appearance: none;
  appearance: none;
  border: 1px solid #2d3035;
  border-radius: 2px;
  color: #ccccdc;
  background: #111217 url("data:image/svg+xml,%3Csvg xmlns='http://www.w3.org/2000/svg' viewBox='0 0 12 12' fill='none' stroke='%23ccccdc' stroke-width='2'%3E%3Cpath d='M2 4l4 4 4-4'/%3E%3C/svg%3E") no-repeat right 14px center / 10px;
  font: 18px Roboto, "Noto Sans CJK SC", sans-serif;
}

.links {
  margin-left: auto;
  margin-right: 5px;
  display: flex;
  gap: 5px;
  font-size: 15px;
  font-weight: 500;
}

.links .ic {
  width: 17px;
  height: 17px;
}

.links .bolt {
  width: 14px;
}

.links .menu {
  width: 47px;
}

.row {
  display: flex;
  align-items: center;
  height: 28px;
  margin: 20px 0 15px;
  padding-left: 4px;
  gap: 4px;
  font-size: 20px;
  line-height: 28px;
}

.row.second {
  margin-top: 15px;
}

.grid {
  display: grid;
  grid-template-columns: repeat(24, minmax(0, 1fr));
  gap: 10px;
}

.w24 { grid-column: span 24; }
.w10 { grid-column: span 10; }
.w8 { grid-column: span 8; }
.w7 { grid-column: span 7; }
.w3 { grid-column: span 3; }
.w2 { grid-column: span 2; }

.panel {
  position: relative;
  background: #181b1f;
  border: 1px solid #24272c;
  border-radius: 3px;
}

.panel h3 {
  height: 40px;
  display: flex;
  align-items: center;
  justify-content: center;
  gap: 8px;
  font-size: 18px;
  line-height: 24px;
  white-space: nowrap;
}

.panel h3 .ch {
  margin-right: -20px;
  stroke: #8e8e99;
}

.overview {
  min-height: 322px;
}

.info {
  position: absolute;
  left: 0;
  top: 0;
  width: 40px;
  height: 40px;
  padding: 2px 7px;
  background: linear-gradient(135deg, #24292e 50%, transparent 50%);
  color: #9a9ba5;
  font: bold 15px/18px "Liberation Serif", serif;
}

table {
  width: 100%;
  table-layout: fixed;
  border-collapse: separate;
  border-spacing: 0;
  border-top: 2px solid #111217;
  font-size: 14px;
}

.hosts {
  height: 208px;
}

th {
  height: 28px;
  padding: 0 0 0 17px;
  background: #22252b;
  border-bottom: 3px solid #111217;
  color: #33a2e5;
  font-weight: 400;
  line-height: 20px;
  text-align: left;
}

td {
  height: 35px;
  padding: 0 0 0 15px;
  border-right: 2px solid #111217;
  border-bottom: 2px solid #111217;
  line-height: 20px;
}

.hosts th {
  padding-left: 14px;
}

.hosts th:first-child {
  padding-left: 18px;
}

td:last-child {
  border-right: 0;
}

.hosts a {
  display: inline-block;
  border-bottom: 1px solid #ccccdc;
}

.parts td {
  padding-left: 17px;
}

.parts .ch {
  width: 10px;
  height: 10px;
  margin-left: 10px;
}

.up {
  transform: rotate(180deg);
}

.ok, .warn, .bad {
  color: #fff;
}

.ok { background: #32a62e; }
.warn { background: #d67629; }
.bad { background: #e03434; }
.free { color: #32a62e; }

td.mid {
  padding: 0;
  text-align: center;
}

.c245 { width: 245px; }
.c276 { width: 276px; }
.c158 { width: 158px; }
.c129 { width: 129px; }
.c111 { width: 111px; }
.c123 { width: 123px; }
.c153 { width: 153px; }
.c155 { width: 155px; }
.c164 { width: 164px; }
.c112 { width: 112px; }
.c122 { width: 122px; }
.c163 { width: 163px; }
.c161 { width: 161px; }
.c253 { width: 253px; }
.c187 { width: 187px; }
.c151 { width: 151px; }
.c126 { width: 126px; }
.c150 { width: 150px; }
.c124 { width: 124px; }

/* charts */
.chart svg {
  display: block;
  width: 100%;
  font-size: 15px;
}

.chart text {
  fill: #ccccdc;
  dominant-baseline: central;
}

.gl {
  stroke: #303336;
  stroke-width: 2;
}

.legend {
  display: flex;
  align-items: center;
  gap: 13px;
  height: 28px;
  margin-bottom: 7px;
  padding: 0 10px 0 23px;
  list-style: none;
  font-size: 15px;
  line-height: 20px;
  white-space: nowrap;
}

.legend li {
  display: flex;
  align-items: center;
}

.legend li::before {
  content: "";
  width: 17px;
  height: 5px;
  margin-right: 10px;
  border-radius: 1px;
}

.legend .red::before { background: #c4162a; }
.legend .yellow::before { background: #eab839; }
.legend .cyan::before { background: #6ed0e0; }

.legend .cyan {
  margin-left: auto;
}

.legend span {
  margin-left: 9px;
}

/* single stats */
.stack {
  display: flex;
  flex-direction: column;
  gap: 10px;
}

.stat {
  height: 85px;
  text-align: center;
}

.stat p {
  line-height: 42px;
  color: #32a62e;
  font-size: 20px;
  font-weight: 500;
}

.stat small {
  font-size: 18px;
}

.stat .long {
  font-size: 14px;
}

.gauges {
  padding: 8px 10px 0;
}

.gauge {
  display: grid;
  grid-template-columns: 180px 62px;
  row-gap: 2px;
  height: 64px;
}

.gauge h4 {
  grid-column: span 2;
  font-size: 18px;
  line-height: 28px;
}

.gauge span {
  font-size: 18px;
  line-height: 34px;
  text-align: right;
  color: #60b85b;
}

.gauge .high {
  color: #f2b22f;
}

.lcd {
  display: flex;
  gap: 2px;
  height: 34px;
}

.lcd i {
  width: 13px;
  border-radius: 2px;
  background: #26362b;
}

.lcd i:nth-child(n+10) { background: #3c3324; }
.lcd i:nth-child(12) { background: #40212a; }

.lcd i.lit {
  background: radial-gradient(#73bf69, #579a54);
}

/* browser sidebar */
.edgebar {
  width: 55px;
  flex: none;
  display: flex;
  flex-direction: column;
  align-items: center;
  padding-top: 2px;
}

.edgebar button {
  height: 50px;
  flex: none;
}

.edgebar svg {
  width: 22px;
  height: 22px;
}

.edgebar hr {
  width: 36px;
  margin: 14px 0;
  border: 0;
  border-top: 1px solid #bdbdbd;
}

.edgebar .grow {
  flex: 1;
}

.grow ~ hr {
  margin: 2px 0;
}

.edgebar .grow ~ button {
  height: 48px;
}
```
FILE: charts.js
```js
// Draws the graph panels and the LCD gauges.
// Series values are a share (0-100) of the plot height.
const times = ['02:00', '04:00', '06:00', '08:00', '10:00', '12:00'];

function line(x1, y1, x2, y2) {
  return `<line class="gl" x1="${x1}" y1="${y1}" x2="${x2}" y2="${y2}"/>`;
}

function draw(id, o) {
  const width = o.width || 791;
  const height = o.height || 245;
  const plot = o.bottom - o.top;
  const step = (o.last - o.tick) / 5;
  const y = v => o.bottom - v * plot / 100;
  let out = '';

  // labels below the drawing are left out
  const label = (tx, ty, anchor, text) => ty > height ? '' :
    `<text x="${tx}" y="${ty}" text-anchor="${anchor}">${text}</text>`;

  o.yLeft.forEach((t, i) => {
    const gy = Math.round(o.top + i * plot / (o.yLeft.length - 1));
    out += line(o.left, gy, o.right, gy) + label(o.left - 7, gy - 2, 'end', t);
  });
  (o.yRight || []).forEach((t, i) => {
    const gy = Math.round(o.top + i * plot / (o.yRight.length - 1));
    out += line(o.right, gy, o.right + 6, gy) + label(o.right + 12, gy - 2, 'start', t);
  });
  times.forEach((t, i) => {
    const gx = Math.round(o.tick + i * step);
    out += line(gx, o.top, gx, o.bottom) + label(gx, o.bottom + 16, 'middle', t);
  });

  const mid = o.titleY || 125;
  if (o.leftTitle) {
    out += `<text transform="translate(20 ${mid}) rotate(-90)" text-anchor="middle">${o.leftTitle}</text>`;
  }
  if (o.rightTitle) {
    out += `<text transform="translate(772 ${mid}) rotate(90)" text-anchor="middle">${o.rightTitle}</text>`;
  }

  // samples every 30 minutes, the first one at 01:00
  const x = i => o.tick + (i - 2) * step / 4;
  if (o.total) {
    out += `<path d="M${o.left} ${y(o.total)}H${x(23)}" stroke="#c4162a" stroke-width="3"/>`;
  }
  if (o.used) {
    const pts = o.used.map((v, i) => `${i ? x(i - 1) : o.left},${y(v)}`).join(' ');
    out += `<polyline points="${pts}" fill="none" stroke="#eab839" stroke-width="3"/>`;
  }
  (o.dots || []).forEach((v, i) => {
    out += `<circle cx="${x(i)}" cy="${y(v)}" r="3" fill="#6ed0e0"/>`;
  });
  out += o.extra || '';

  document.getElementById(id).innerHTML =
    `<svg viewBox="0 0 ${width} ${height}">${out}</svg>`;
}

draw('load', {
  left: 60, right: 715, top: 22, bottom: 213, tick: 136, last: 681,
  yLeft: ['20', '15', '10', '5', '0'], yRight: ['10%', '9%', '8%'],
  leftTitle: '总负载', rightTitle: '平均使用率', total: 90,
  used: [8.7, 8.5, 8.7, 8.7, 8, 9.4, 8.5, 9.8, 9.9, 8.2, 10.5, 9.8, 9.2, 9.8, 9.1, 10.8, 11, 10.5, 10.3, 8.9, 9.2, 10.8, 8.5, 8.4, 9.1],
  dots: [72, 46, 47, 46, 49, 44.1, 60.5, 61, 53.1, 54.5, 57.7, 52.1, 65, 60.5, 93.4, 79.1, 68.6, 68.8, 83.4, 53.8, 95.5, 65.7, 77.4, 49.8]
});

draw('mem', {
  left: 100, right: 715, top: 22, bottom: 213, tick: 171, last: 684,
  yLeft: ['23.3 GiB', '18.6 GiB', '14.0 GiB', '9.31 GiB', '4.66 GiB', '0 B'],
  yRight: ['72%', '71%', '70%', '69%', '68%'],
  leftTitle: '总内存量', rightTitle: '平均使用率', total: 89.2,
  used: [61.3, 62, 62.2, 62.2, 62, 62.7, 62.7, 63.1, 63.4, 63.2, 63.2, 63.8, 63.4, 63.2, 63.2, 62.9, 63.4, 63.8, 63.2, 63.4, 63.4, 63.8, 63.1, 63.8, 63.4],
  dots: [32.4, 40.6, 40.1, 31.5, 56.8, 57, 63.8, 73.7, 69.7, 69, 79.4, 73.7, 70.6, 69.7, 57.1, 73.7, 80.8, 69.5, 73.9, 75.1, 79.3, 66, 81.2, 77.9]
});

draw('disk', {
  left: 107, right: 702, top: 22, bottom: 213, tick: 176, last: 671,
  yLeft: ['1.4 TiB', '931.3 GiB', '465.7 GiB', '0 B'],
  yRight: ['18.5%', '18.4%', '18.4%', '18.3%', '18.3%', '18.2%', '18.2%'],
  leftTitle: '总磁盘量', rightTitle: '平均使用率', total: 93.2,
  used: [16.2, 16.2, 16.2].concat(Array(22).fill(16.5)),
  dots: [13.6, 10.6, 74.9, 76.7, 76.5, 78, 79.6, 80.1, 81.7, 78.6, 80.7, 81.7, 83.8, 84.3, 85.7, 77.7, 79.3, 74.7, 80.7, 75.4, 77, 75.4, 76.7, 77.9]
});

// hourly traffic in MiB, download above zero and upload below
const down = [16, 12, 28, 11, 19, 14, 21, 14, 29, 30, 134, 48];
const up = [31, 28, 40, 28, 32, 30, 35, 31, 42, 46, 144, 68];
function bar(x, w, d, u) {
  const k = 83 / 191;
  return `<rect x="${x}" y="${105 - d * k}" width="${w}" height="${d * k}" fill="#7eb26d"/>` +
    `<rect x="${x}" y="105" width="${w}" height="${u * k}" fill="#eab839"/>`;
}
let bars = bar(104, 2, 9, 27);
down.forEach((d, i) => {
  bars += bar(Math.round(121 + i * 46.5), i === 11 ? 29 : 32, d, up[i]);
});
draw('traffic', {
  width: 691, height: 232, left: 104, right: 662, top: 22, bottom: 188, tick: 168, last: 633,
  yLeft: ['191 MiB', '95.4 MiB', '0 B', '-95 MiB', '-191 MiB'],
  leftTitle: '上传（-）/下载（+）', titleY: 118, extra: bars
});

draw('cpu', {
  height: 80, left: 46, right: 762, top: 22, bottom: 181, tick: 129, last: 726,
  yLeft: ['15%', '10%', '5%', '0%'],
  extra: `<polyline fill="none" stroke="#c4162a" stroke-width="2" points="46,92 88,84 91,77 94,86 132,84 135,68 139,84 200,92 330,82 337,74 342,77 347,75 350,80 353,67 356,78 361,74 365,79 368,71 374,75 379,84 406,82 412,73 416,86 446,84 450,68 453,84 540,90 635,82 639,70 643,82 656,75 671,75 678,86 740,82 745,73 751,79 757,77 761,74 763,78"/>`
});

draw('meminfo', {
  height: 80, left: 75, right: 709, top: 22, bottom: 180, tick: 148, last: 677,
  yLeft: ['4.66 GiB', '3.73 GiB', '2.79 GiB', '1.86 GiB', '954 MiB', '0 B'],
  yRight: ['100%', '75%', '50%', '25%', '0%'], rightTitle: '内存使用率', titleY: 110,
  extra: `<path d="M75 50H709" stroke="#c4162a" stroke-width="3"/><g fill="#00c8ff"><circle cx="148" cy="69" r="3"/><circle cx="413" cy="69" r="3"/><circle cx="677" cy="67" r="3"/></g>`
});

draw('net', {
  height: 80, left: 95, right: 762, top: 22, bottom: 194, tick: 172, last: 729,
  yLeft: ['4 Mb/s', '2 Mb/s', '0 b/s', '-2 Mb/s', '-4 Mb/s'],
  leftTitle: '上传（-）/下载（+）', titleY: 119,
  extra: `<path d="M617 100l4-43 3 35 2-22 2 30M758 100l3-28" fill="none" stroke="#7eb26d" stroke-width="2"/>`
});

document.querySelectorAll('.gauge').forEach(g => {
  const lit = Number(g.dataset.lit);
  let cells = '';
  for (let i = 0; i < 12; i++) {
    cells += i < lit ? '<i class="lit"></i>' : '<i></i>';
  }
  g.querySelector('.lcd').innerHTML = cells;
});
```
